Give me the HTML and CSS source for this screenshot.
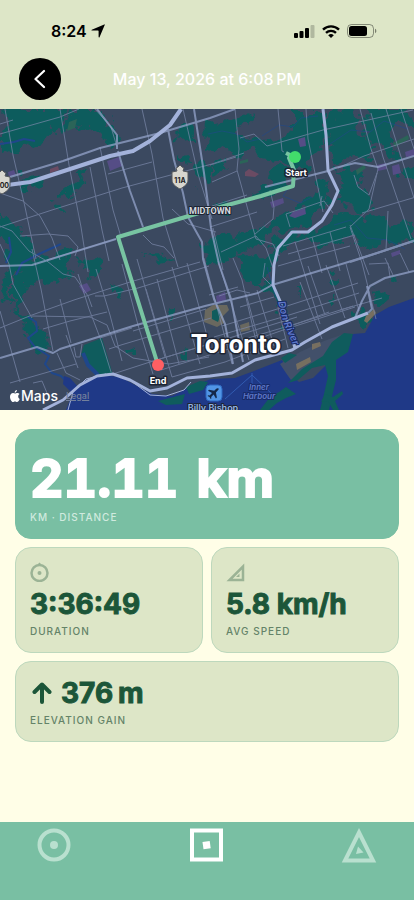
FILE: index.html
```
<!DOCTYPE html>
<html lang="en">
<head>
  <meta charset="utf-8">
  <meta name="viewport" content="width=device-width, initial-scale=1">
  <title>Activity</title>
  <link rel="stylesheet" href="styles.css">
</head>
<body>
  <header class="header">
    <div class="status-bar">
      <div class="status-left">
        <span>8:24</span>
        <svg width="14" height="14" viewBox="0 0 14 14"><path d="M13.2.4c.4-.2.7.1.5.5L8.500 13.200c-.2.500-.9.400-.9-.1V7.200c0-.4-.2-.6-.6-.6H.9c-.5 0-.6-.7-.1-.9z"/></svg>
      </div>
      <div class="status-right">
        <svg width="21" height="13" viewBox="0 0 21 13">
          <rect x="0" y="8" width="4" height="5" rx="1"/>
          <rect x="5.500" y="6" width="4" height="7" rx="1"/>
          <rect x="11" y="3" width="4" height="10" rx="1"/>
          <rect x="16.500" y="0" width="4" height="13" rx="1" opacity=".2"/>
        </svg>
        <svg width="18" height="13" viewBox="0 0 18 13" fill="none" stroke="#000" stroke-width="2.400">
          <path d="M1 4.600a11.500 11.500 0 0 1 16 0M4 7.900a7.200 7.200 0 0 1 10 0"/>
          <path d="M9 13 6.200 10.300a4 4 0 0 1 5.600 0z" fill="#000" stroke="none"/>
        </svg>
        <svg width="30" height="14" viewBox="0 0 30 14">
          <rect x=".5" y=".5" width="26" height="13" rx="4" fill="none" stroke="#000" stroke-opacity=".4"/>
          <rect x="2" y="2" width="18" height="10" rx="2.500"/>
          <path d="M28 4.800c1.800.6 1.800 3.800 0 4.400z" opacity=".45"/>
        </svg>
      </div>
    </div>
    <div class="nav-row">
      <button class="back" type="button" aria-label="Back">
        <svg width="12" height="20" viewBox="0 0 12 20"><path d="M10 2 1.500 10l8.500 8" fill="none" stroke="#fff" stroke-width="2.200" stroke-linecap="round" stroke-linejoin="round"/></svg>
      </button>
      <h1>May 13, 2026 at 6:08&#8239;PM</h1>
    </div>
  </header>

  <main>
    <div class="map">
      <svg viewBox="0 0 414 301" preserveAspectRatio="xMidYMid slice" role="img" aria-label="Route map of Toronto">
        <!-- breaks up the edges of the parks -->
        <filter id="rough" x="-5%" y="-5%" width="110%" height="110%">
          <feTurbulence type="fractalNoise" baseFrequency="0.09" numOctaves="3" seed="4"/>
          <feDisplacementMap in="SourceGraphic" scale="20" xChannelSelector="R" yChannelSelector="G"/>
        </filter>
        <rect width="414" height="301" fill="#3b4960"/>

        <!-- parks and ravines -->
        <g fill="#0f5c5d" filter="url(#rough)">
          <path d="M6 0h62l-5 12 8 6-14 6-10-4-4 13-12 7-9-4-9 5-13-1V26l9-3z"/>
          <path d="M70 0h33l10 18 6 17-8 3-12-16-10-4-6 4-18-5zM0 29l14-4 14 2 11-3 4 8-25 8-18 6z"/>
          <path d="M82 59l3 12-5 10-12 6-10 1 2-5 12-7 7-9zM19 66l25 1-3 10-20 2zM55 92l10 4-2 8-8-4z"/>
          <path d="M0 103l17 14 14 16 5 13-8 10-13 5-8 20 4 12-5 2-4-18 7-22-3-18-7-10z"/>
          <path d="M12 176l9-19 20-10 18-2 9-8 6 4-8 15 5 10-17 8-14-1-12 5-12 22 15 8 18 23-2 11-9 1-14-18-1-14-11-14z"/>
          <path d="M79 151l6-5 16 6 3 8-11 6-12-4zM110 174l8 1 2 12-6-1z"/>
          <path d="M129 239l8 1v5l-7-1zM166 200l7-2v9l-6 1zM178 242l8-2v9l-7 1z"/>
          <path d="M176 23l8-7 10 4-2 10-12 1zM180 46l8 6-1 8-5-3zM143 144l20 2 9 7-14 2z"/>
          <path d="M208 15l24-4 14-8 8 4-15 10-4 9 6 4 13-4 12 5 16-2 12-7V4h32l3 20-7 14-9 9-6 12-13 3-13-11-18-2-8-8-18 5-22-7-8 2z"/>
          <path d="M196 50l11 5 5 16-8 6-9-12zM209 57l14-6 4 9-12 5zM272 58l12-3 6 20-18 11-14 4-10-3 18-12z"/>
          <path d="M331 3l22-3 9 9-5 17 9 3 5 15-18 6-20 3-5-23zM365 0l38 0 11 9v7l-17-2-7 11 9 22-13 4-10-17-9-2z"/>
          <path d="M334 58l18-2 11 13-4 10 11 7 4 14-16 5-9-9-10 4-3-11 7-9zM398 62l16-5v12l-10 6z"/>
          <path d="M320 70l10 8-5 20-15 18-16 3-24 3-10 14-18 5-13 12-16-1-9 6 4-20 14-8 12 1 16-10 14-4 12-11 18-3 19-18z"/>
          <path d="M278 128l14-4 17-1 15-7 14-13 14 2 8 6 18-4 17 12 19-6v21l-26-1-17 5-21-8-24 7-21-7-17 6-16 20-6-6z"/>
          <path d="M236 148l14-3 17 3 6 11-13 15 13 3 13 26 4 22-7-9-5-20-16-20-15-2-9-10 3-8z"/>
          <path d="M202 133l12-2 15-9 4 8-11 8-13 4zM213 96l12 0 4 6-12 3z"/>
          <path d="M297 176l7 0-1 13-5-4zM331 165l9 2-2 9-8-1zM330 191l4-3 3 8-5 1zM391 166l6-2 2 9-6 1zM371 182l10-2 9 8-8 7-8 1zM353 202l8-3 12 8-3 10-13-4z"/>
        </g>
        <path d="M84 236l18-7 11 37-15 1-10-14-7-7z" fill="#0f5c5d"/>

        <!-- neighbourhood blocks -->
        <g fill="#554d86">
          <path d="M107 52l12-4 3 9-12 5zM8 63l6-2 2 5-7 2zM270 93l13-4 1 5-12 5zM293 103l12-4 1 6-11 4-6-2zM298 30l7-2 1 9-6 1zM377 56l9-2 1 6-9 2zM392 57l7-2 2 9-8 2zM405 43l9-3v7l-8 1zM79 177l8-3 4 7-7 4zM216 187l9-4 1 8-9 3zM391 144l9-3v4l-8 3z"/>
        </g>
        <path d="M50 60l8-3 1 4-9 3zM245 63l4-3 10 5-4 3-10-1z" fill="#6b4b63"/>
        <path d="M393 34l15-8 1 4-14 8zM356 61l8-5 2 3-9 7zM69 13l8-3-2 9-8 3zM240 52l8-2v3l-8 2z" fill="#2b6458"/>
        <path d="M205 201l8-5 14 0 2 5-6 6 1 7-7 4-13-5zM240 216l9-3 1 8-9 2z" fill="#69685f"/>
        <path d="M212 202l7-3 2 6-3 8-6-3z" fill="#0f5c5d"/>

        <!-- rivers -->
        <g fill="none" stroke="#1f478b" stroke-linejoin="round">
          <path d="M0 35l14-2 10-3 11 2M9 128l2 15-5 11M16 166l6-12 17-9 22-10M28 208l8 5 1 9-9 7 7 9 14 9-4 8 7 9 9 3 12 12" stroke-width="2"/>
          <path d="M208 25l14-3 15 3 10 8 13-3M262 27l17-11 14 2 8-9 17-2M291 75l-8 12 17 7 12-6M330 35l21-14 19 2 14-11 24 8M334 116l17-5 16 18 21 2 17 9M267 158l8 28 13 24" stroke-width="1" opacity=".6"/>
          <path d="M83 244l5 12 10 10" stroke-width="4"/>
        </g>

        <!-- lake -->
        <path d="M66 301l7-18 11-11 17-6 19 2 15 8 17 9 20 2 18-9 21-8 24-1 24-9 23-9 8 14 9 8 14-4 15-15 25-29 12-1 10-18 14-8 25-9v112z" fill="#1f3987"/>
        <path d="M64 267l6 2 9 10-6 6-10-10z" fill="#1f3987"/>

        <!-- port lands and islands -->
        <g fill="#42506a">
          <path d="M280 255l20-12 24-11 20-7-5 12-32 20-15 12-6-5zM286 264l38-21 3 4-36 24z"/>
        </g>
        <g fill="#0f5c5d">
          <path d="M323 247l9-14 12-9 9 1-5 18-12 8 0 20-5 20-2 10h-9l4-16 4-18-3-11-13 3-14 12-10 3 14-14z"/>
          <path d="M279 283l7-5 10 7-10 4-9 5-8 7h-9l10-13zM325 285l8 3 9-6 1 3-8 7 4 9h-6l-5-9-7 1zM281 249l8-5 8 2-12 8zM186 278l14-6 8 1-5 8-14 4zM158 292l27-7-3 10-16 1z"/>
        </g>
        <path d="M296 255l14-7 1 5-14 8zM312 235l8-2 1 4-9 4zM366 207l8-7 2 4-9 10-3-2z" fill="#776f60"/>
        <path d="M252 264v21M252 266l-27 24M252 266l21 20" fill="none" stroke="#315bb1" stroke-width="1"/>

        <!-- small streets -->
        <g class="streets">
          <path d="M0 25l60-17 19-8M0 118l52-17 70-22 90-24 32-11M47 151l69-21M100 38l13 63 8 27M108 65l44-12M5 0l8 46 12 52 11 52M60 0l9 56 12 62 7 45M90 58l12 63 7 31M95 0l16 18 6 20M142 0l10 45 11 64 15 49"/>
          <path d="M0 84l23 8 17 15 12 22 8 22M0 117l12 5 17 20 16 9M20 127l28-2 20 2 10 11-3 9M0 135l9 20 4 20 19 34M32 140l9 40 12 62M47 152l16 13 12 3 13 19 4 11M32 206l42-15 56-18 70-20M32 207l58 1 17 8 8 21 18 12 36 6 40-7"/>
          <path d="M0 219l32-13M43 220l27-8 37-9M60 190l11 44M0 202l20 71M10 274l66-19M57 244l9 20 14 7M66 226l12 33M78 165l11 35 13 34 9 29M82 235l-2 13h-4l-2-10M33 274l9-2 5 12M96 160l14 46 12 46M122 155l16 61 15 49M146 180l26 88M137 150l28 98M157 170l22 85"/>
          <path d="M172 158l28 97M187 154l25 91M95 187h9l34-8 71-22M100 229l32-10M133 222l73-22M109 240l12-4 90-27M113 265l37-12 56-17M150 253l89-27 58-18M161 261l71-22 54-19 69-22M172 268l53-15 60-23"/>
          <path d="M204 149l28 106M218 152l31 99M233 149l9 22 17 74M246 185l15 55M257 181l17 56M222 217l65-20 71-23M214 228l72-21 73-23M218 238l84-25 51-16M240 198l34-10M209 186l29-8M285 219l44-16"/>
          <path d="M235 0l4 40-2 21 14 51 5 18 17 5 6 12M278 0l4 42 2 1M240 29l14-4 13 12 56-16 90-20M306 0l2 30 15 73M360 0l11 40 7 20-9 40-19 18 12 36 14 56M371 4l12 44 28 82M386 0l28 89M401 0l13 40"/>
          <path d="M210 56l26-8M212 73l25-11M212 97l35-11M210 118l47-15M213 119l10 42M221 143l35-16 10 12 7 20M270 81l4 17-1 12-18 15M290 118l-4-13 29-10 9-3 9 12M362 104l54-16M388 102l-2 38M320 97l2-10M354 66l4 12 11 8 8-22M350 116l19 50M330 123l10 39M312 128l10 36M295 133l25 82M283 137l63-19M288 145l67-19M278 157l24-7 48-13M308 157l17 49M326 156l19 53M346 155l13 47M278 198l10 41M300 173l22 57M369 155l19-1 2 14M385 149l8 17M400 144l9 19"/>
          <path d="M0 15l13-4M183 0l15 65 14 45M172 100l16 15 28 8M143 126l9 9 12 3 10 11M250 184l-13-3-18 6M265 154l-2 14 9 9M338 59l26-12 50-17M340 201l42-12"/>
        </g>
        <g class="avenues">
          <path d="M10 68l53-16 37-13 60-15 50-15 25-9M118 42l5 17 7 23 13 36M117 40v-14L97 0M194 0l10 64 7 55 8 36 12 35 12 63M168 20l6 31 9 33 5 24 14 25 1 17 11 40 11 25 8 40M265 78l63-16 7-3 20-5 23 4 36-11M350 153l64-21M0 157l32-1 84-26"/>
          <path d="M0 249l37-11 16 6 7-4 73-23 72-20 53-13 14-8 73-22 32-10 39-13M355 209l7-17 8-15 15-8 29-7M367 177l5 23-4 4"/>
        </g>

        <!-- highways -->
        <g class="highways">
          <path d="M0 77l30-4 37-12 43-14 23-5 17-10 20-16L181 0" stroke-width="4"/>
          <path d="M323 0l3 26 2 35 10 21-6 14-10 16-14 11-16 0-14 16-4 17-1 20 7 16 7 20 8 27" stroke-width="3"/>
          <path d="M43 301l20-10 17-15 17-9 16-2 17 6 20 11 17-3 20-10 23-2 22-3 23-13 37-10 13-8 27-15 36-14" stroke-width="3"/>
          <path d="M68 301l5-18 13-13 20-5M130 271l20 15 16 1 18-6 7-8" stroke-width="1"/>
        </g>

        <!-- route -->
        <path d="M286 44l8 4-5 1 5 12-1 16-32 10-52 14-91 27 40 128" fill="none" stroke="#78c4a2" stroke-width="4" stroke-linejoin="round"/>
        <circle cx="295" cy="48" r="6" fill="#42dc6b"/>
        <circle cx="158" cy="256" r="6" fill="#ff5f63"/>

        <!-- road shields -->
        <g class="shield">
          <path d="M172 63l5-1-1-3 2-1 2-2 2 2 2 1-1 3 5 1v8c0 4-4 7-8 9-4-2-8-5-8-9z"/>
          <text x="180" y="74">11A</text>
          <path d="M-6 68l5-1-1-3 2-1 2-2 2 2 2 1-1 3 5 1v8c0 4-4 7-8 9-4-2-8-5-8-9z"/>
          <text x="2" y="79">400</text>
        </g>

        <!-- airport -->
        <rect x="206" y="276" width="16" height="16" rx="4" fill="#5195e6" stroke="#2d69c2"/>
        <path d="M218.500 279.500c-.8-.7-2 0-2.800.8l-1.500 1.400-5.200-1-1 1 4 2.300-2.300 2.400-1.500-.2-.7.7 2 1.200 1.200 2 .7-.7-.2-1.500 2.400-2.300 2.300 4 1-1-1-5.200 1.400-1.500c.8-.8 1.900-1.700 1.200-2.400z" fill="#14284a"/>

        <g class="labels">
          <text x="296" y="67" class="pin-label">Start</text>
          <text x="158" y="275" class="pin-label">End</text>
          <text x="210" y="105" class="district">MIDTOWN</text>
          <text x="236" y="244" class="city">Toronto</text>
          <text x="213" y="302" class="airport">Billy Bishop</text>
          <text x="259" y="281" class="water">Inner</text>
          <text x="259" y="290" class="water">Harbour</text>
          <path id="don" d="M278 193l5 20 14 32" fill="none" stroke="none"/>
          <text class="river"><textPath href="#don">Don River</textPath></text>
        </g>
      </svg>
      <div class="attribution">
        <svg width="10" height="12" viewBox="0 0 10 12" fill="#fff"><path d="M6.900.1c.1 1.300-.9 2.600-2.200 2.600C4.500 1.500 5.600.3 6.900.1zM8.200 6.300c0-1.100.6-1.800 1.300-2.300-.6-.8-1.400-1.100-2.200-1.100-1 0-1.600.5-2.200.5-.6 0-1.300-.5-2-.5C1.500 2.900 0 4.300 0 6.700 0 9 1.600 12 3 12c.7 0 1.100-.5 2-.5s1.200.5 2 .5c1.100 0 2.300-1.800 2.700-3-.9-.4-1.500-1.300-1.500-2.700z"/></svg>
        <span>Maps</span>
        <a href="#legal">Legal</a>
      </div>
    </div>

    <section class="stats">
      <div class="card card-main">
        <div class="value value-large">21.11<span class="unit">km</span></div>
        <div class="label">KM · DISTANCE</div>
      </div>
      <div class="card">
        <svg class="card-icon" width="20" height="20" viewBox="0 0 20 20"><circle cx="9.500" cy="11" r="8" fill="none" stroke="#9bb395" stroke-width="2.500"/><circle cx="9.500" cy="11" r="2" fill="#9bb395"/><path d="M7.500 2.500 9.500.5l2 2z" fill="#9bb395"/></svg>
        <div class="value">3:36:49</div>
        <div class="label">DURATION</div>
      </div>
      <div class="card">
        <svg class="card-icon" width="20" height="20" viewBox="0 0 20 20"><path d="M17 4.500v13.500H3.500z" fill="none" stroke="#9bb395" stroke-width="2.500"/><path d="M13.500 11.500v3.500H10z" fill="#9bb395"/></svg>
        <div class="value">5.8 km/h</div>
        <div class="label">AVG SPEED</div>
      </div>
      <div class="card card-wide">
        <div class="value"><svg class="up" width="20" height="22" viewBox="0 0 20 22"><path d="M10 20V3M2.500 10 10 2.500l7.500 7.500" fill="none" stroke="#1c5639" stroke-width="4" stroke-linecap="round" stroke-linejoin="round"/></svg>376<span class="unit">m</span></div>
        <div class="label">ELEVATION GAIN</div>
      </div>
    </section>
  </main>

  <nav class="tabs">
    <button type="button" aria-label="Record">
      <svg width="36" height="36" viewBox="0 0 36 36"><circle cx="18" cy="18" r="14.500" fill="none" stroke="#b9e0cf" stroke-width="4"/><circle cx="18" cy="18" r="4" fill="#b9e0cf"/></svg>
    </button>
    <button type="button" aria-label="Activities">
      <svg width="36" height="36" viewBox="0 0 36 36"><rect x="3" y="3.500" width="29" height="29" fill="none" stroke="#fff" stroke-width="4"/><path d="M13.500 15 20.700 14l1 7.200-7.200 1z" fill="#fff"/></svg>
    </button>
    <button type="button" aria-label="Stats">
      <svg width="36" height="36" viewBox="0 0 36 36"><path d="M18 5.500 32 33.500H4z" fill="none" stroke="#b9e0cf" stroke-width="4"/><path d="M17 19.500 22.500 25.500 15 27z" fill="#b9e0cf"/></svg>
    </button>
  </nav>
</body>
</html>
```
FILE: styles.css
```
* {
  box-sizing: border-box;
}

body {
  margin: 0;
  min-height: 100vh;
  display: flex;
  flex-direction: column;
  background-color: #fffee7;
  color: #1c5639;
  font-family: Inter, "Liberation Sans", sans-serif;
}

button {
  border: none;
  padding: 0;
  background: none;
  cursor: pointer;
}

svg {
  display: block;
}

/* Header */
.header {
  background-color: #dde6c7;
  padding: 20px 19px 9px;
}

.status-bar {
  display: flex;
  justify-content: space-between;
  align-items: center;
  height: 22px;
  margin-bottom: 16px;
  padding: 0 18px 0 32px;
  color: #000;
  font-size: 16px;
  font-weight: 600;
}

.status-left {
  display: flex;
  align-items: center;
  gap: 4px;
}

.status-right {
  display: flex;
  align-items: center;
  gap: 7px;
}

.nav-row {
  display: grid;
  grid-template-columns: 42px 1fr 42px;
  align-items: center;
}

.back {
  display: flex;
  align-items: center;
  justify-content: center;
  width: 42px;
  height: 42px;
  border-radius: 50%;
  background-color: #000;
}

h1 {
  margin: 0;
  text-align: center;
  color: #fff;
  font-size: 16px;
  font-weight: 500;
}

/* Map */
.map {
  position: relative;
  height: 301px;
  overflow: hidden;
}

.map > svg {
  width: 100%;
  height: 100%;
}

.streets,
.avenues,
.highways {
  fill: none;
  stroke-linejoin: round;
}

.streets {
  stroke: #7c89ab;
  stroke-width: 1;
  opacity: 0.7;
}

.avenues {
  stroke: #93a3ca;
  stroke-width: 2;
  opacity: 0.75;
}

.highways {
  stroke: #a3b2da;
}

.shield path {
  fill: #d7d6cf;
  stroke: #54575b;
}

.shield text {
  fill: #222;
  font-size: 7px;
  font-weight: 700;
  text-anchor: middle;
}

.labels text {
  text-anchor: middle;
  fill: #fff;
  stroke: #1d2433;
  stroke-width: 3px;
  stroke-linejoin: round;
  paint-order: stroke;
}

.labels .pin-label {
  font-size: 9px;
  font-weight: 700;
}

.labels .district {
  fill: #d5d9df;
  stroke-width: 2px;
  font-family: Roboto, sans-serif;
  font-size: 9px;
  font-weight: 700;
}

.labels .city {
  font-family: Roboto, sans-serif;
  font-size: 26px;
  font-weight: 700;
}

.labels .airport {
  fill: #93b4e4;
  stroke-width: 2px;
  font-size: 9px;
  font-weight: 600;
}

.labels .water,
.labels .river {
  fill: #6079c9;
  stroke: #172a68;
  stroke-width: 2px;
  font-size: 8px;
  font-style: italic;
  font-weight: 600;
}

.labels .river {
  font-size: 10px;
  text-anchor: start;
}

.attribution {
  position: absolute;
  left: 10px;
  bottom: 4px;
  display: flex;
  align-items: center;
  gap: 1px;
  color: #fff;
  font-size: 14px;
  font-weight: 500;
  line-height: 20px;
}

.attribution a {
  margin-left: 7px;
  color: #73809c;
  font-size: 9px;
}

/* Stats */
.stats {
  display: grid;
  grid-template-columns: 1fr 1fr;
  gap: 8px;
  padding: 19px 15px;
}

.card {
  padding: 14px;
  background-color: #dde6c7;
  border: 1px solid #bdd8bd;
  border-radius: 16px;
}

.card-main,
.card-wide {
  grid-column: 1 / -1;
}

.card-main {
  padding-top: 18px;
  background-color: #79bfa3;
  border-color: #79bfa3;
  color: #fff;
}

.card-icon {
  margin-bottom: 5px;
}

.value {
  display: flex;
  align-items: center;
  font-size: 28px;
  font-weight: 700;
  line-height: 34px;
  white-space: pre;
  /* rounds the corners of the digits */
  -webkit-text-stroke: 1px currentColor;
  stroke-linejoin: round;
}

.unit {
  margin-left: 5px;
}

.up {
  margin: 0 9px 0 2px;
}

.value-large {
  font-size: 52px;
  line-height: 62px;
  font-variant-numeric: tabular-nums;
  -webkit-text-stroke-width: 2px;
}

.value-large .unit {
  margin-left: 18px;
}

.label {
  color: #648368;
  font-size: 10px;
  font-weight: 500;
  line-height: 14px;
  letter-spacing: 1px;
  margin-top: 3px;
}

.card-main .label {
  margin-top: 0;
  color: #d0eadf;
}

/* Bottom tabs */
.tabs {
  display: flex;
  justify-content: space-between;
  align-items: flex-start;
  height: 78px;
  margin-top: auto;
  padding: 5px 37px 0 36px;
  background-color: #79bfa3;
}
```
